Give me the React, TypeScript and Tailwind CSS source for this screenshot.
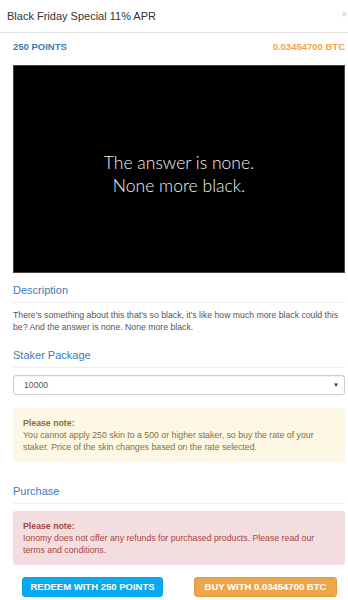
export default function App() {
  return (
    <div className="w-[348px] h-[600px] overflow-hidden bg-white font-['Liberation_Sans',Arial,sans-serif] text-[8.7px] leading-[12px] text-[#555]">
      {/* modal header */}
      <div className="h-[33px] border-b border-[#e5e5e5] pl-[7px] pr-[1px] flex items-center justify-between">
        <div className="text-[11px] leading-[15px] text-[#333]">Black Friday Special 11% APR</div>
        <div className="text-[10px] text-[#c8c8c8] -mt-[2px]">×</div>
      </div>

      <div className="pl-[13px] pr-[3px]">
        <div className="pt-[8px] flex justify-between text-[9.5px] font-bold leading-[12px]">
          <span className="text-[#3a7bb8]">250 POINTS</span>
          <span className="text-[#f0a443]">0.03454700 BTC</span>
        </div>

        <div className="mt-[12px] h-[208px] bg-black border border-[#444] flex flex-col items-center justify-center pt-[9px] text-[#f2f2f2] font-['Lato',sans-serif] font-light text-[17.5px] leading-[23px]">
          <div>The answer is none.</div>
          <div>None more black.</div>
        </div>

        <h4 className="mt-[10px] pb-[4px] border-b border-[#eee] text-[11px] leading-[15px] text-[#3a7bb8]">Description</h4>
        <p className="mt-[6px]">
          There's something about this that's so black, it's like how much more black could this be? And the answer is none. None more black.
        </p>

        <h4 className="mt-[15px] pb-[4px] border-b border-[#eee] text-[11px] leading-[15px] text-[#3a7bb8]">Staker Package</h4>
        <div className="mt-[7px] h-[20px] border border-[#ccc] rounded-[3px] flex items-center justify-between pl-[10px] pr-[5px] text-[#555] shadow-[inset_0_1px_1px_rgba(0,0,0,0.06)]">
          <span>10000</span>
          <span className="text-[6px] text-[#333]">▼</span>
        </div>

        <div className="mt-[13px] rounded-[3px] bg-[#fcf8e3] pl-[10px] pr-[12px] py-[9px] text-[8.75px] text-[#8a6d3b]">
          <div className="font-bold">Please note:</div>
          <div>You cannot apply 250 skin to a 500 or higher staker, so buy the rate of your staker. Price of the skin changes based on the rate selected.</div>
        </div>

        <h4 className="mt-[22px] pb-[4px] border-b border-[#eee] text-[11px] leading-[15px] text-[#3a7bb8]">Purchase</h4>

        <div className="mt-[7px] rounded-[3px] bg-[#f2dede] pl-[10px] pr-[12px] py-[9px] text-[8.75px] text-[#a94442]">
          <div className="font-bold">Please note:</div>
          <div>Ionomy does not offer any refunds for purchased products. Please read our terms and conditions.</div>
        </div>

        <div className="mt-[12px] pl-[9px] flex gap-[31px] text-[9.5px] font-bold text-white">
          <button className="w-[141px] h-[20px] rounded-[3px] bg-[#08a9ef] border border-[#06a0e4]">REDEEM WITH 250 POINTS</button>
          <button className="w-[143px] h-[20px] rounded-[3px] bg-[#eea64b] border border-[#e39a3c]">BUY WITH 0.03454700 BTC</button>
        </div>
      </div>
    </div>
  );
}
